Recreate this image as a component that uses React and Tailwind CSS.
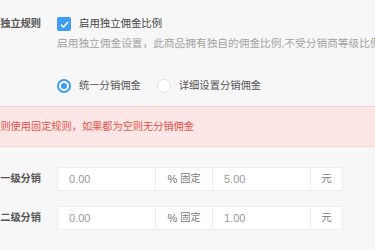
const font = { fontFamily: '"Liberation Sans", "Noto Sans CJK SC", sans-serif' };

const Label = ({ children }) => (
  <div className="w-[41px] shrink-0 flex justify-end whitespace-nowrap text-[10.2px] font-semibold text-[#555]">
    {children}
  </div>
);

const Radio = ({ checked, label }) => (
  <div className="flex items-center">
    {checked ? (
      <span className="w-[14px] h-[14px] rounded-full bg-[#3d9cf3] flex items-center justify-center">
        <span className="w-[10px] h-[10px] rounded-full bg-white flex items-center justify-center">
          <span className="w-[6px] h-[6px] rounded-full bg-[#3d9cf3]" />
        </span>
      </span>
    ) : (
      <span className="w-[14px] h-[14px] rounded-full bg-white border border-[#e3e3e3]" />
    )}
    <span className="ml-[8px] text-[10.3px] text-[#555]">{label}</span>
  </div>
);

const InputRow = ({ label, rate, fixed }) => (
  <div className="flex items-center h-[24px]">
    <Label>{label}</Label>
    <div className="ml-[16px] flex h-[24px] text-[#999]">
      <div className="w-[99px] border border-[#ececec] bg-white flex items-center pl-[11px] text-[11px]">{rate}</div>
      <div className="-ml-px w-[58px] border border-[#ececec] bg-white flex items-center justify-center text-[10.2px] text-[#777]">
        <span className="text-[11px] mr-[3px]">%</span>固定
      </div>
      <div className="-ml-px w-[99px] border border-[#ececec] bg-white flex items-center pl-[11px] text-[11px]">{fixed}</div>
      <div className="-ml-px w-[33px] border border-[#ececec] bg-white flex items-center justify-center text-[10.2px] text-[#777]">元</div>
    </div>
  </div>
);

export default function App() {
  return (
    <div className="w-full h-[250px] bg-[#f7f7f7] overflow-hidden" style={font}>
      <div className="pt-[17px] flex">
        <div className="h-[14px] flex items-center">
          <Label>独立规则</Label>
        </div>
        <div className="ml-[16px] flex flex-col">
          <div className="h-[14px] flex items-center">
            <span className="w-[14px] h-[14px] rounded-[2px] bg-[#3d9cf3] flex items-center justify-center">
              <svg width="9" height="7" viewBox="0 0 9 7" fill="none">
                <path d="M1 3.5 L3.5 6 L8 1" stroke="white" strokeWidth="1.6" />
              </svg>
            </span>
            <span className="ml-[8px] text-[10.4px] text-[#444]">启用独立佣金比例</span>
          </div>
          <div className="mt-[5px] h-[14px] flex items-center whitespace-nowrap text-[10.7px] text-[#a2a2a2]">
            启用独立佣金设置，此商品拥有独自的佣金比例,不受分销商等级比例及默认设置影响
          </div>
        </div>
      </div>

      <div className="mt-[29px] h-[14px] flex items-center pl-[57px] gap-[16px]">
        <Radio checked label="统一分销佣金" />
        <Radio label="详细设置分销佣金" />
      </div>

      <div className="mt-[13px] h-[41px] bg-[#fde7e6] border-y border-[#f4d3d1] flex items-center">
        <div className="w-[194px] flex justify-end whitespace-nowrap text-[10.2px] text-[#e5534b]">
          如果输入了佣金，则使用固定规则，如果都为空则无分销佣金
        </div>
      </div>

      <div className="mt-[20px]">
        <InputRow label="一级分销" rate="0.00" fixed="5.00" />
      </div>
      <div className="mt-[15px]">
        <InputRow label="二级分销" rate="0.00" fixed="1.00" />
      </div>
    </div>
  );
}
